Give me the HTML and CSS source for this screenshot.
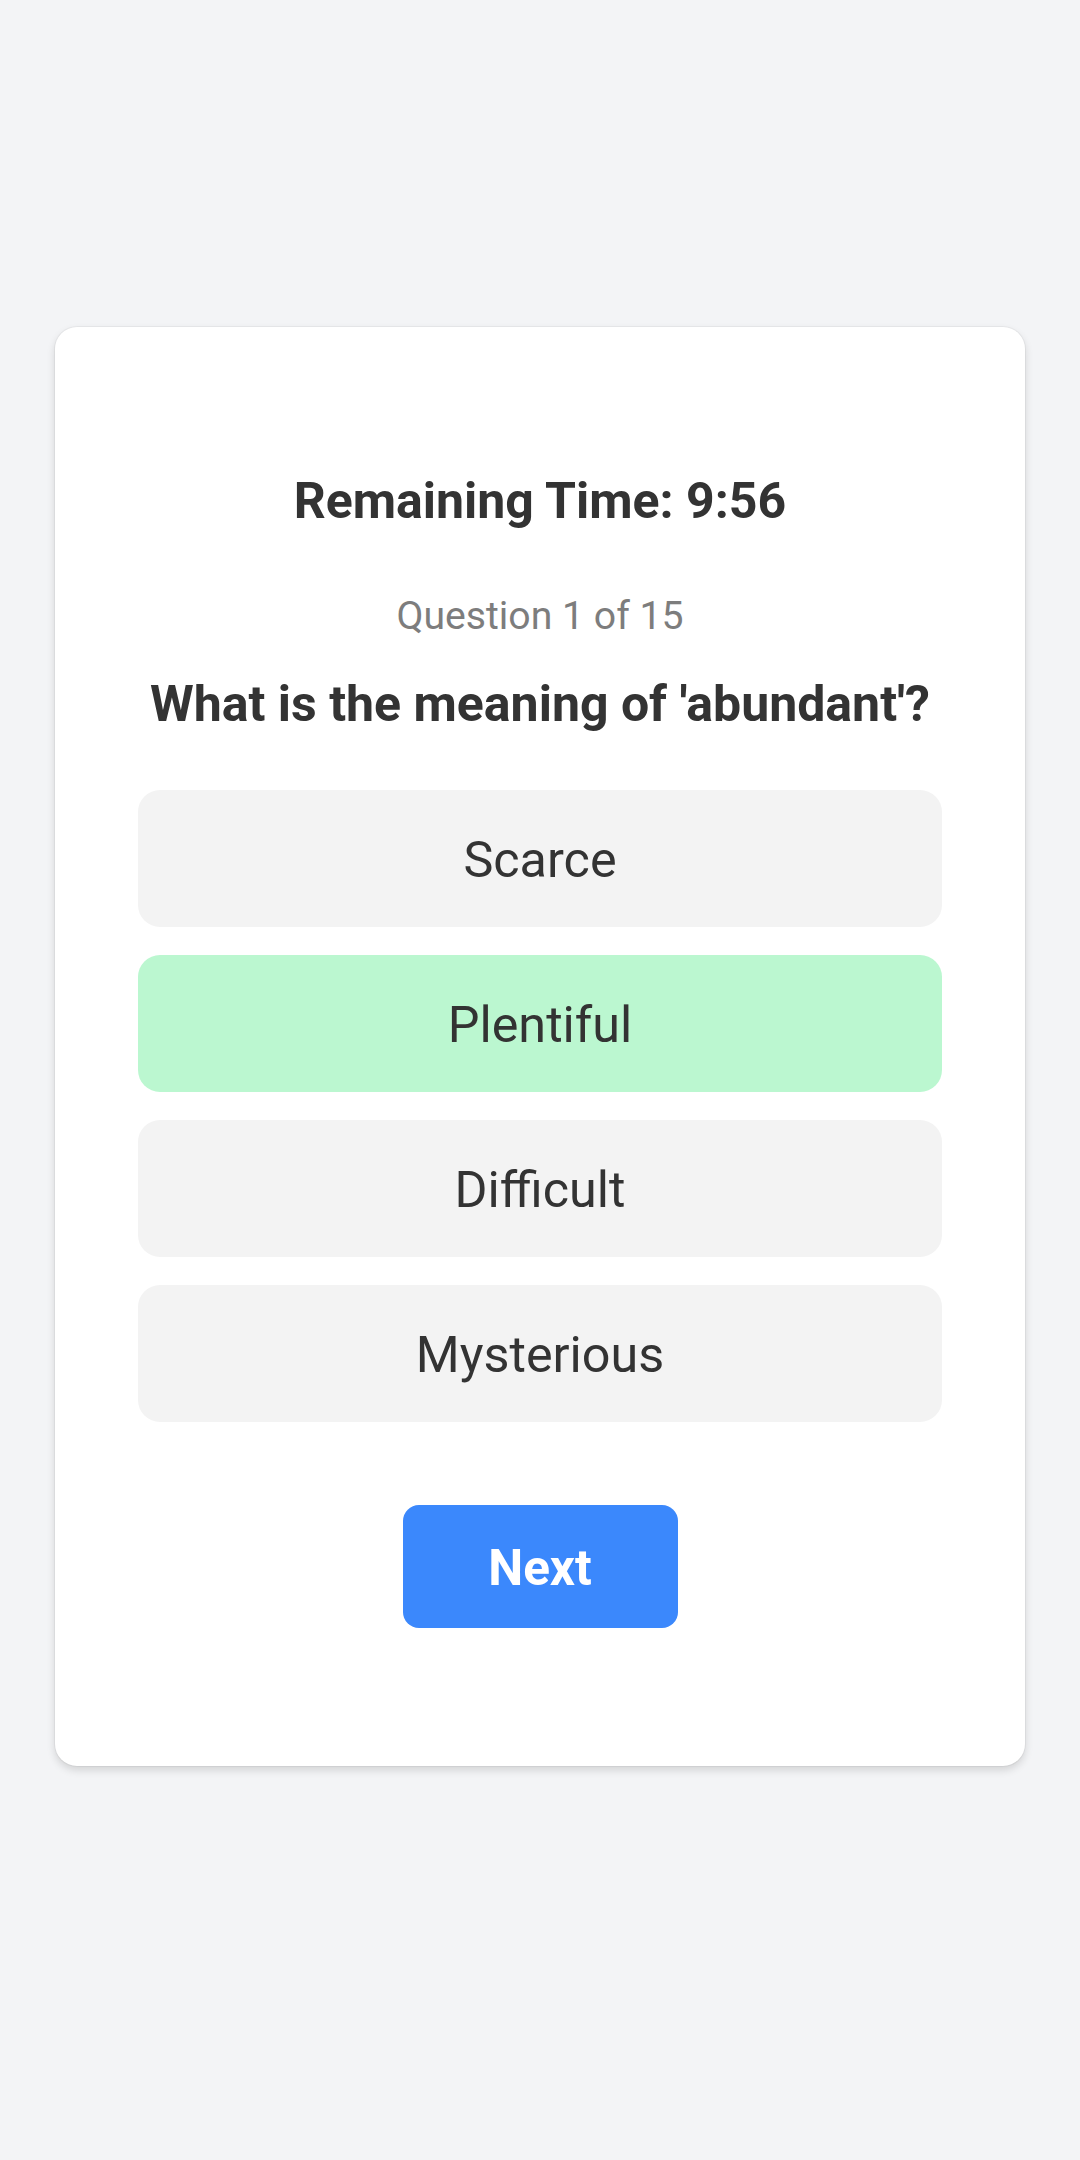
FILE: index.html
```html
<!DOCTYPE html>
<html lang="en">
<head>
<meta charset="utf-8">
<title>Quiz</title>
<link rel="stylesheet" href="styles.css">
</head>
<body>
<main class="page">
  <section class="card">
    <h1 class="timer">Remaining Time: 9:56</h1>
    <p class="counter">Question 1 of 15</p>
    <h2 class="question">What is the meaning of 'abundant'?</h2>
    <div class="options">
      <button class="option">Scarce</button>
      <button class="option option-selected">Plentiful</button>
      <button class="option">Difficult</button>
      <button class="option">Mysterious</button>
    </div>
    <div class="actions">
      <button class="next">Next</button>
    </div>
  </section>
</main>
</body>
</html>
```
FILE: styles.css
```css
* { box-sizing: border-box; }
html, body {
  margin: 0;
  padding: 0;
  background: #f3f4f6;
  font-family: Roboto, "Liberation Sans", Arial, sans-serif;
  color: #333333;
}
.page {
  width: 1080px;
  min-height: 2160px;
  padding: 327px 55px 0;
}
.card {
  background: #ffffff;
  border-radius: 22px;
  box-shadow: 0 0 0 1px rgba(0,0,0,0.04), 0 4px 8px rgba(0,0,0,0.14);
  padding: 144px 83px 138px;
  display: flex;
  flex-direction: column;
  align-items: stretch;
}
.timer {
  margin: 0;
  font-size: 50px;
  line-height: 60px;
  font-weight: 700;
  text-align: center;
  color: #333333;
}
.counter {
  margin: 62px 0 0;
  font-size: 39.2px;
  line-height: 46px;
  text-align: center;
  color: #7d7d7d;
}
.question {
  margin: 35px 0 0;
  font-size: 50px;
  line-height: 60px;
  font-weight: 700;
  text-align: center;
  color: #333333;
}
.options {
  margin-top: 56px;
  display: flex;
  flex-direction: column;
  gap: 28px;
}
.option {
  height: 137px;
  border: none;
  border-radius: 22px;
  background: #f3f3f3;
  font-family: inherit;
  font-size: 50.3px;
  color: #333333;
  text-align: center;
  padding: 2px 0 0;
}
.option-selected {
  background: #bbf7d0;
}
.actions {
  margin-top: 83px;
  display: flex;
  justify-content: center;
}
.next {
  width: 275px;
  height: 123px;
  border: none;
  border-radius: 16px;
  background: #3b88fc;
  color: #ffffff;
  font-family: inherit;
  font-size: 49.5px;
  font-weight: 700;
  padding: 2px 0 0;
}
```
